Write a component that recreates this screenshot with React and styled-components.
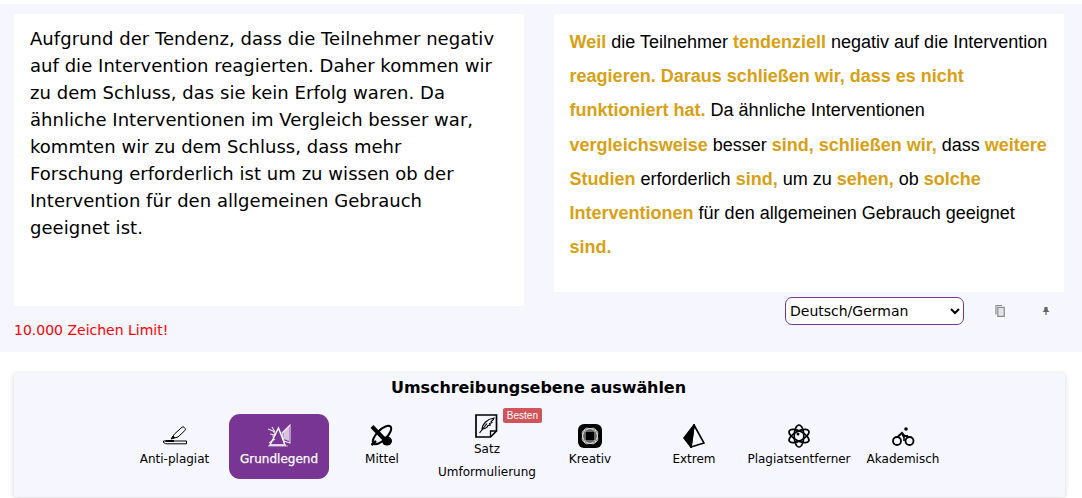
import React from "react";
import styled, { createGlobalStyle } from "styled-components";

const GlobalStyle = createGlobalStyle`
  html, body {
    margin: 0;
    padding: 0;
    background: #fff;
    font-family: "DejaVu Sans", Verdana, sans-serif;
    overflow: hidden;
  }
`;

const Page = styled.div`
  width: 1082px;
  height: 498px;
  padding-top: 4px;
  box-sizing: border-box;
`;

const Editor = styled.section`
  height: 348px;
  box-sizing: border-box;
  background: #f5f6fe;
  padding: 10px 15px 0 14px;
  display: grid;
  grid-template-columns: 510px 510px;
  column-gap: 30px;
`;

const Column = styled.div`
  display: flex;
  flex-direction: column;
`;

const InputCard = styled.div`
  height: 292px;
  box-sizing: border-box;
  background: #fff;
  padding: 11px 26px 11px 16px;
  font-size: 18px;
  line-height: 27px;
  letter-spacing: 0.04px;
  color: #000;
`;

const OutputCard = styled.div`
  height: 278px;
  box-sizing: border-box;
  background: #fff;
  padding: 11px 16px 11px 15.6px;
  font-family: "Liberation Sans", Arial, sans-serif;
  font-size: 18px;
  line-height: 34.2px;
  color: #000;
`;

const Hl = styled.b`
  color: #daa014;
`;

const Limit = styled.div`
  margin-top: 16px;
  font-size: 14px;
  line-height: 17px;
  color: #ff0000;
`;

const Tools = styled.div`
  margin-top: 5px;
  display: flex;
  align-items: center;
`;

const LangSelect = styled.select`
  margin-left: 231px;
  width: 179px;
  height: 28px;
  box-sizing: border-box;
  border: 1px solid #7a3593;
  border-radius: 7px;
  background: #fff;
  color: #000;
  font-family: "DejaVu Sans", sans-serif;
  font-size: 14px;
  padding: 0;
`;

const ToolButton = styled.button`
  border: 0;
  background: none;
  padding: 0;
  width: 12px;
  height: 14px;
  display: flex;
  align-items: center;
  justify-content: center;
  margin-left: ${(p) => p.$gap}px;
`;

const LevelPanel = styled.section`
  margin: 21px 17px 0 14px;
  height: 124px;
  box-sizing: border-box;
  background: #f5f6fe;
  border-radius: 2px;
  box-shadow: 0 1px 5px rgba(0, 0, 0, 0.18);
  padding: 4px 2px 0 0;
`;

const PanelTitle = styled.h2`
  margin: 0;
  text-align: center;
  font-size: 16px;
  line-height: 21px;
  font-weight: 700;
  letter-spacing: -0.07px;
  color: #000;
`;

const Levels = styled.div`
  margin: 16px 0 0 106px;
  display: flex;
  align-items: flex-start;
`;

const Level = styled.div`
  position: relative;
  width: ${(p) => p.$w}px;
  height: 65px;
  box-sizing: border-box;
  border-radius: 11px;
  display: flex;
  flex-direction: column;
  align-items: center;
  padding-top: ${(p) => (p.$tall ? 0 : 10)}px;
  font-size: 12px;
  line-height: 16px;
  text-align: center;
  white-space: nowrap;
  color: ${(p) => (p.$active ? "#fff" : "#000")};
  background: ${(p) => (p.$active ? "#783593" : "transparent")};
  -webkit-text-stroke: ${(p) => (p.$active ? "0.25px #fff" : "0")};

  svg {
    display: block;
    flex: none;
    margin-bottom: 3px;
  }
`;

const Label = styled.span`
  flex: none;
`;

const LongLabel = styled.span`
  flex: none;
  margin-top: 7px;
`;

const Badge = styled.span`
  position: absolute;
  top: -6px;
  right: -3px;
  background: #d05459;
  color: #fff;
  font-family: "Liberation Sans", Arial, sans-serif;
  font-size: 10px;
  line-height: 15px;
  padding: 0 4px;
  border-radius: 2px;
`;

const Copy = () => (
  <svg width="12" height="14" viewBox="0 0 12 14" fill="none" stroke="#8a8a8a" strokeWidth="1.2">
    <path d="M8 1.5H2v9" />
    <rect x="3.8" y="3.4" width="6.4" height="9" fill="#e4e4e8" />
  </svg>
);

const Pin = () => (
  <svg width="8" height="8" viewBox="0 0 8 8" fill="#666">
    <path d="M2.5 0H5.5L5.8 3 7.500 5H.5L2.2 3zM3.400 5H4.600V8H3.400z" />
  </svg>
);

const Marker = () => (
  <svg width="24" height="24" viewBox="0 0 24 24" fill="none" stroke="#000" strokeWidth="1">
    <path d="M12 9.500 19 3.200a1.600 1.600 0 0 1 2.200.2l.8 1a1.600 1.600 0 0 1-.2 2.200L15 13l-3 .8-2-1.800z" />
    <path d="M10 12 8 15l4-1.200" fill="#000" />
    <path d="M.5 17H23.500v2.800H2.800L.5 18.500z" />
    <path d="M2.500 17H11" strokeWidth="2" />
  </svg>
);

const Prism = () => (
  <svg width="24" height="24" viewBox="0 0 24 24" fill="none" stroke="#fff" strokeWidth="1.1">
    <path d="M11.500 4 3 21h15z" strokeWidth="1.400" />
    <path d="M1 5l5 2 3 4M3 10l6 1M5 3l3 5M5 12h3M8 15l-6 4M15 9l8-8v18l-6-2z" opacity="0.85" />
    <path d="M16 8l6-6v15l-5-2z" fill="#fff" stroke="none" opacity="0.7" />
    <path d="M1 22h20" opacity="0.6" />
  </svg>
);

const Orbit = () => (
  <svg width="24" height="24" viewBox="0 0 24 24" fill="none" stroke="#000">
    <path d="M2 2.500 18 19" strokeWidth="4" />
    <ellipse cx="12" cy="11" rx="12" ry="5" transform="rotate(-45 12 11)" strokeWidth="2" />
    <path d="M1.500 21 6 17" strokeWidth="2.400" />
    <ellipse cx="17" cy="17" rx="5" ry="4.500" fill="#000" stroke="none" />
  </svg>
);

const Quill = () => (
  <svg width="24" height="24" viewBox="0 0 24 24" fill="none" stroke="#000" strokeWidth="1.700">
    <path d="M1 1H21.500V17l-6 6H1z" />
    <path d="M15.500 23V17h6" strokeWidth="1.300" />
    <path d="M7 15c.5-5 5-10 12-11-.5 2-2 3-2.800 3.500l.8 1-2.400 1 .6 1.500-2.200.5c-1 2-3.500 3.500-6 3.500z" strokeWidth="1.200" />
    <path d="M4.500 19 12 9.500" strokeWidth="1.200" />
  </svg>
);

const Frames = () => (
  <svg width="24" height="24" viewBox="0 0 24 24">
    <rect width="24" height="24" rx="6" fill="#000" />
    <g fill="none" stroke="#fff" strokeWidth="0.8">
      <rect x="5" y="5" width="14" height="14" rx="3.500" transform="rotate(14 12 12)" />
      <rect x="5" y="5" width="14" height="14" rx="3.500" transform="rotate(-14 12 12)" />
      <rect x="7" y="7" width="10" height="10" />
    </g>
  </svg>
);

const Pyramid = () => (
  <svg width="22" height="24" viewBox="0 0 22 24" fill="none" stroke="#000" strokeWidth="1.600">
    <path d="M11 1 21 19 8 23z" />
    <path d="M11 1 1 14l7 9z" fill="#000" />
  </svg>
);

const Atom = () => (
  <svg width="24" height="24" viewBox="0 0 24 24" fill="none" stroke="#000" strokeWidth="1.700">
    <ellipse cx="12" cy="12" rx="11" ry="4.800" transform="rotate(28 12 12)" />
    <ellipse cx="12" cy="12" rx="11" ry="4.800" transform="rotate(-28 12 12)" />
    <ellipse cx="12" cy="12" rx="11" ry="4.800" transform="rotate(90 12 12)" />
    <circle cx="11" cy="10" r="1.500" fill="#000" stroke="none" />
  </svg>
);

const Bike = () => (
  <svg width="24" height="24" viewBox="0 0 24 24" fill="none" stroke="#000" strokeWidth="1.800">
    <circle cx="6" cy="17" r="4" />
    <circle cx="18.500" cy="17" r="4" />
    <circle cx="15" cy="5" r="1.800" fill="#000" stroke="none" />
    <path d="M7 12.500 11 9l2.500 3H17" strokeWidth="2" />
    <path d="M11 10l2 3.500V17" strokeWidth="1.600" />
  </svg>
);

export default function App() {
  return (
    <Page>
      <GlobalStyle />
      <Editor>
        <Column>
          <InputCard>
            Aufgrund der Tendenz, dass die Teilnehmer negativ auf die Intervention reagierten. Daher
            kommen wir zu dem Schluss, das sie kein Erfolg waren. Da ähnliche Interventionen im
            Vergleich besser war, kommten wir zu dem Schluss, dass mehr Forschung erforderlich ist um
            zu wissen ob der Intervention für den allgemeinen Gebrauch geeignet ist.
          </InputCard>
          <Limit>10.000 Zeichen Limit!</Limit>
        </Column>
        <Column>
          <OutputCard>
            <Hl>Weil</Hl> die Teilnehmer <Hl>tendenziell</Hl> negativ auf die Intervention{" "}
            <Hl>reagieren. Daraus schließen wir, dass es nicht funktioniert hat.</Hl> Da ähnliche
            Interventionen <Hl>vergleichsweise</Hl> besser <Hl>sind, schließen wir,</Hl> dass{" "}
            <Hl>weitere Studien</Hl> erforderlich <Hl>sind,</Hl> um zu <Hl>sehen,</Hl> ob{" "}
            <Hl>solche Interventionen</Hl> für den allgemeinen Gebrauch geeignet <Hl>sind.</Hl>
          </OutputCard>
          <Tools>
            <LangSelect defaultValue="de">
              <option value="de">Deutsch/German</option>
            </LangSelect>
            <ToolButton $gap={30}>
              <Copy />
            </ToolButton>
            <ToolButton $gap={34}>
              <Pin />
            </ToolButton>
          </Tools>
        </Column>
      </Editor>
      <LevelPanel>
        <PanelTitle>Umschreibungsebene auswählen</PanelTitle>
        <Levels>
          <Level $w={109}>
            <Marker />
            <Label>Anti-plagiat</Label>
          </Level>
          <Level $w={100} $active>
            <Prism />
            <Label>Grundlegend</Label>
          </Level>
          <Level $w={106}>
            <Orbit />
            <Label>Mittel</Label>
          </Level>
          <Level $w={104} $tall>
            <Quill />
            <Label>Satz</Label>
            <LongLabel>Umformulierung</LongLabel>
            <Badge>Besten</Badge>
          </Level>
          <Level $w={102}>
            <Frames />
            <Label>Kreativ</Label>
          </Level>
          <Level $w={106}>
            <Pyramid />
            <Label>Extrem</Label>
          </Level>
          <Level $w={104}>
            <Atom />
            <Label>Plagiatsentferner</Label>
          </Level>
          <Level $w={104}>
            <Bike />
            <Label>Akademisch</Label>
          </Level>
        </Levels>
      </LevelPanel>
    </Page>
  );
}
